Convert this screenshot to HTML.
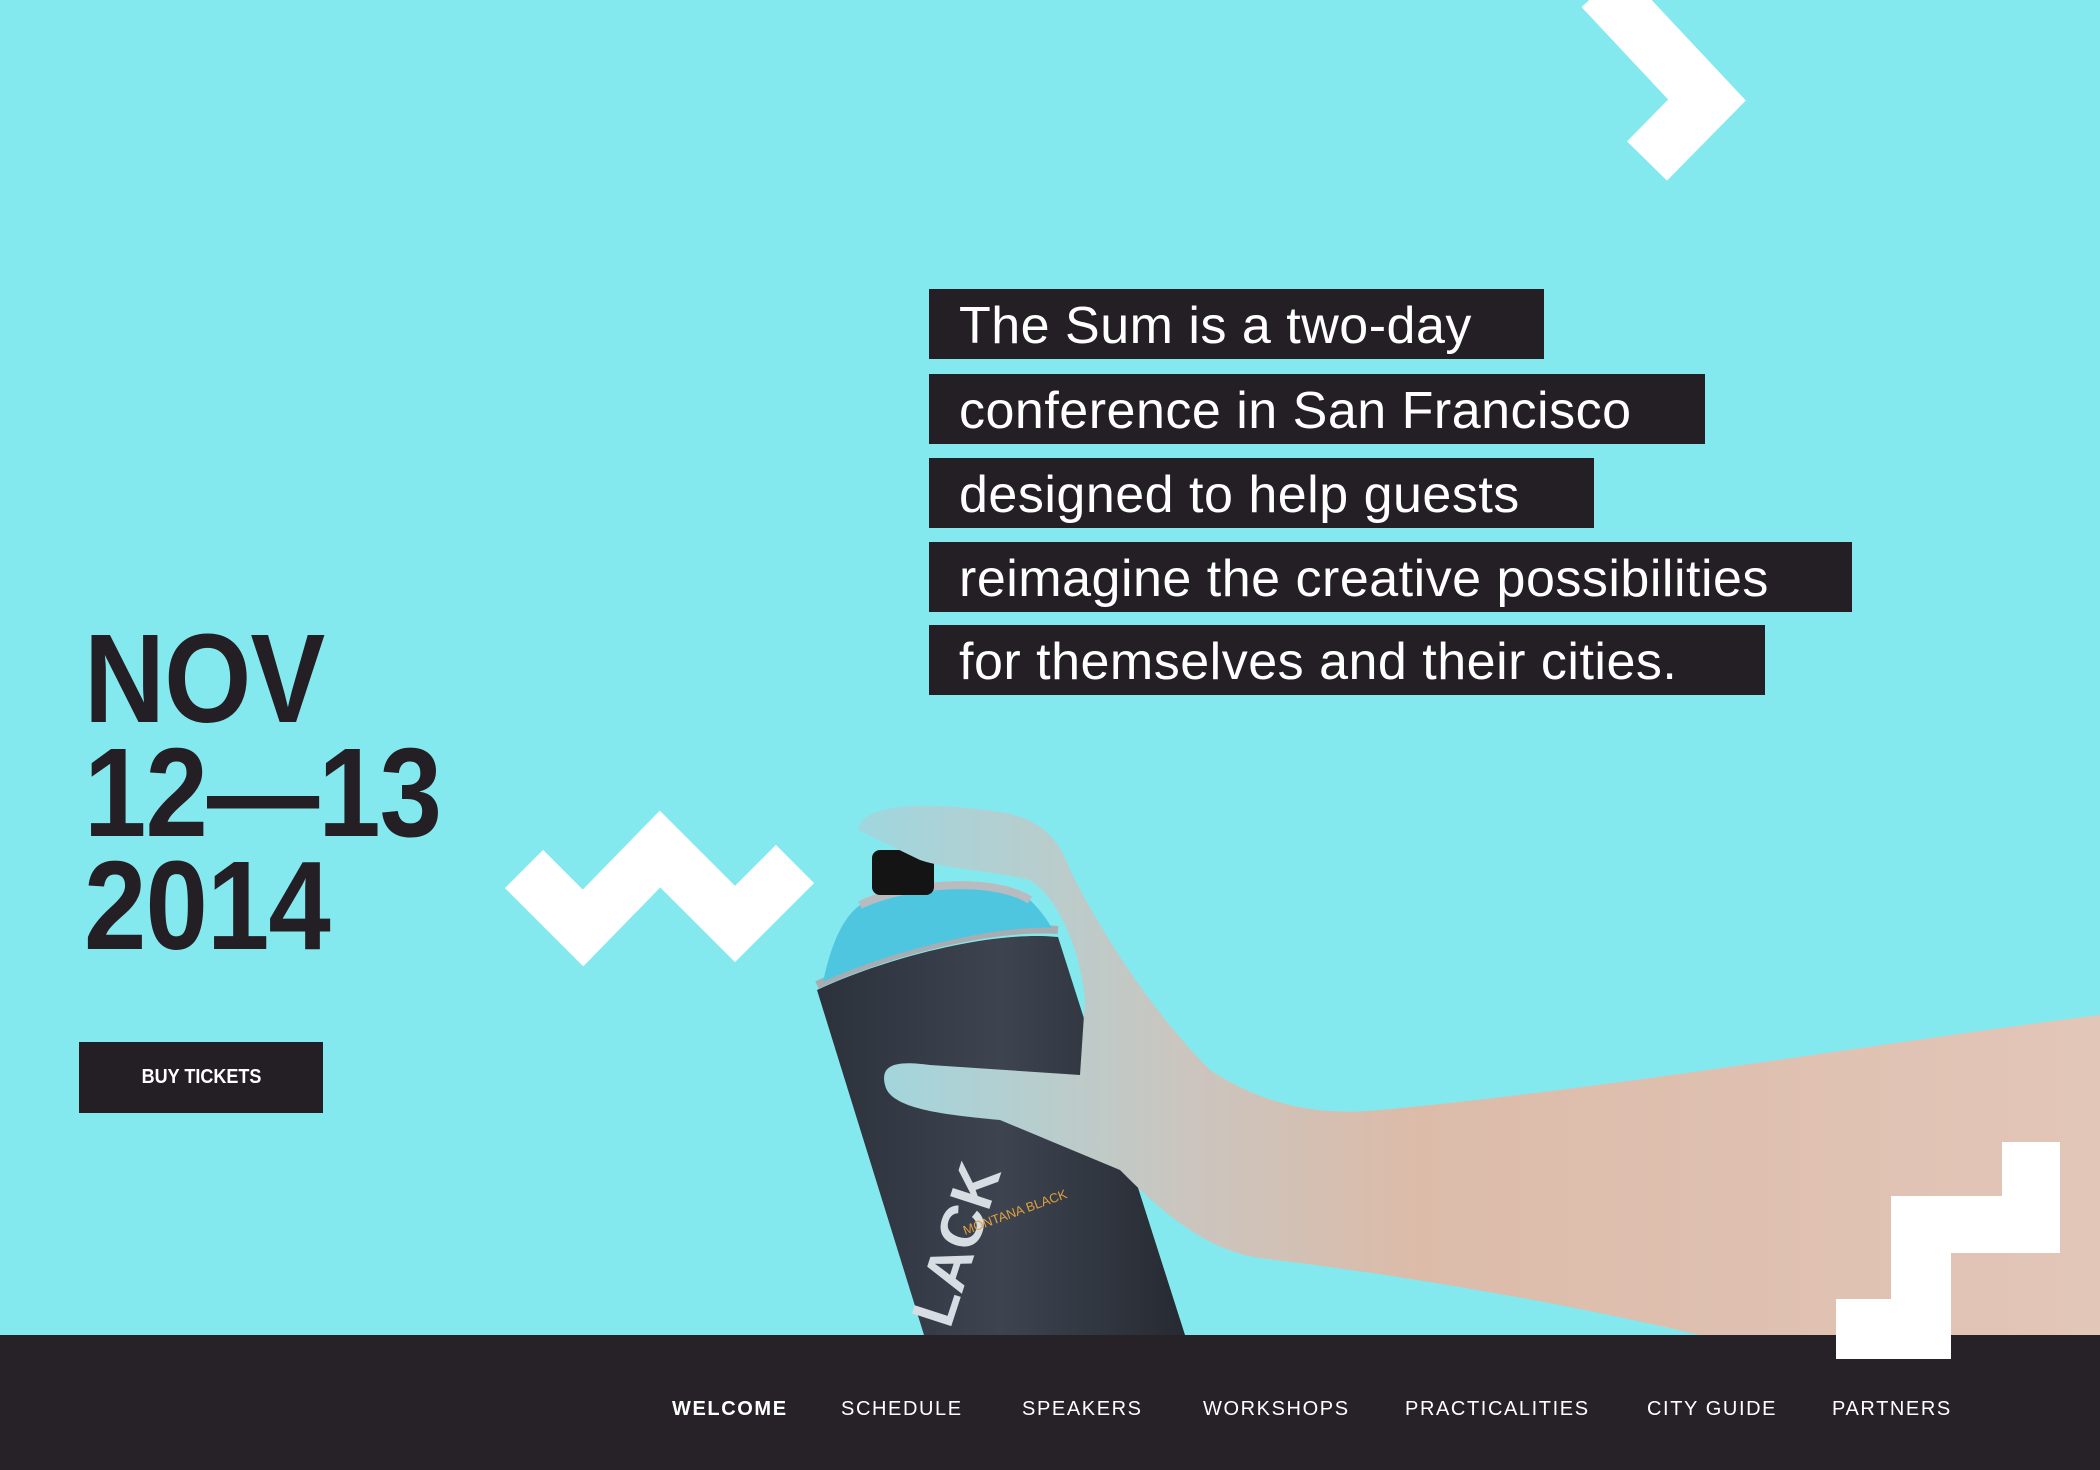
<!DOCTYPE html>
<html><head><meta charset="utf-8"><style>
*{margin:0;padding:0;box-sizing:border-box}
html,body{width:2100px;height:1470px;overflow:hidden;background:#84e9ee;font-family:"Liberation Sans",sans-serif}
.abs{position:absolute}
.date{left:84px;color:#231f24;font-weight:bold;font-size:126px;line-height:1;transform-origin:0 0;transform:scaleX(0.89);letter-spacing:-1px}
.box{position:absolute;left:929px;height:70px;background:#231f24;color:#fff;font-size:52px;line-height:74px;padding-left:30px;white-space:nowrap}
.box span{display:inline-block;transform-origin:0 50%;transform:scaleX(1.0);letter-spacing:0.5px}
.btn{left:79px;top:1042px;width:244px;height:71px;background:#231f24;color:#fff;font-weight:bold;font-size:20px;line-height:71px;text-align:center}
.btn span{display:inline-block;transform:scaleX(0.9)}
.foot{left:0;top:1335px;width:2100px;height:135px;background:#262227}
.nav{position:absolute;top:1398px;color:#fff;font-size:20px;letter-spacing:1.6px;white-space:nowrap}
</style></head><body>
<div class="abs foot"></div>
<svg class="abs" style="left:0;top:0" width="2100" height="1470" viewBox="0 0 2100 1470">
  <defs>
    <linearGradient id="skin" x1="0" y1="0" x2="1" y2="0">
      <stop offset="0" stop-color="#9fd7df"/>
      <stop offset="0.25" stop-color="#c9c6c0"/>
      <stop offset="0.45" stop-color="#dcbba9"/>
      <stop offset="1" stop-color="#e2c6b8"/>
    </linearGradient>
    <linearGradient id="can" x1="0" y1="0" x2="1" y2="0">
      <stop offset="0" stop-color="#2c313b"/>
      <stop offset="0.5" stop-color="#3d4450"/>
      <stop offset="1" stop-color="#262a32"/>
    </linearGradient>
  </defs>
  <path d="M817,990 C880,960 990,930 1058,937 L1185,1335 L924,1335 Z" fill="url(#can)"/>
  <path d="M817,985 C880,955 990,925 1058,930" stroke="#a9adb2" stroke-width="8" fill="none"/>
  <path d="M823,982 C830,950 840,920 860,905 C900,880 990,870 1030,900 C1045,915 1050,925 1052,928 C990,925 880,955 823,982 Z" fill="#4fc6e0"/>
  <path d="M860,905 C900,885 990,875 1030,900" stroke="#b8bcc0" stroke-width="8" fill="none"/>
  <rect x="872" y="850" width="62" height="45" rx="8" fill="#141414"/>
  <text x="0" y="0" transform="translate(950,1330) rotate(-72)" fill="#d8dde3" font-weight="bold" font-size="60">LACK</text>
  <text x="0" y="0" transform="translate(965,1235) rotate(-20)" fill="#e0a040" font-size="13">MONTANA BLACK</text>
  <path d="M858,830 C860,805 920,800 1000,812 C1040,818 1060,840 1070,870 C1100,930 1150,1010 1210,1070 C1270,1110 1330,1115 1380,1110 C1600,1090 1900,1040 2100,1015 L2100,1335 L1700,1335 C1550,1300 1400,1275 1260,1258 C1200,1250 1150,1200 1120,1170 L1000,1120 C950,1115 890,1110 885,1085 C880,1065 895,1060 930,1065 L1080,1075 L1085,1000 C1080,950 1060,900 1030,880 C990,870 950,870 920,860 Z" fill="url(#skin)"/>
  <polyline points="1602,-12 1707,100 1647,161" fill="none" stroke="#fff" stroke-width="56" stroke-linejoin="miter"/>
  <polyline points="524,869 583,928 660,849 735,924 795,864" fill="none" stroke="#fff" stroke-width="54" stroke-linejoin="miter"/>
  <polygon points="2002,1142 2060,1142 2060,1253 1951,1253 1951,1359 1836,1359 1836,1299 1891,1299 1891,1196 2002,1196" fill="#fff"/>
</svg>
<div class="abs date" style="top:616px">NOV</div>
<div class="abs date" style="top:730px">12—13</div>
<div class="abs date" style="top:843px">2014</div>
<div class="abs btn"><span>BUY TICKETS</span></div>
<div class="box" style="top:289px;width:615px"><span>The Sum is a two-day</span></div>
<div class="box" style="top:374px;width:776px"><span>conference in San Francisco</span></div>
<div class="box" style="top:458px;width:665px"><span>designed to help guests</span></div>
<div class="box" style="top:542px;width:923px"><span>reimagine the creative possibilities</span></div>
<div class="box" style="top:625px;width:836px"><span>for themselves and their cities.</span></div>
<div class="nav" style="left:672px;font-weight:bold">WELCOME</div>
<div class="nav" style="left:841px">SCHEDULE</div>
<div class="nav" style="left:1022px">SPEAKERS</div>
<div class="nav" style="left:1203px">WORKSHOPS</div>
<div class="nav" style="left:1405px">PRACTICALITIES</div>
<div class="nav" style="left:1647px">CITY GUIDE</div>
<div class="nav" style="left:1832px">PARTNERS</div>
</body></html>
